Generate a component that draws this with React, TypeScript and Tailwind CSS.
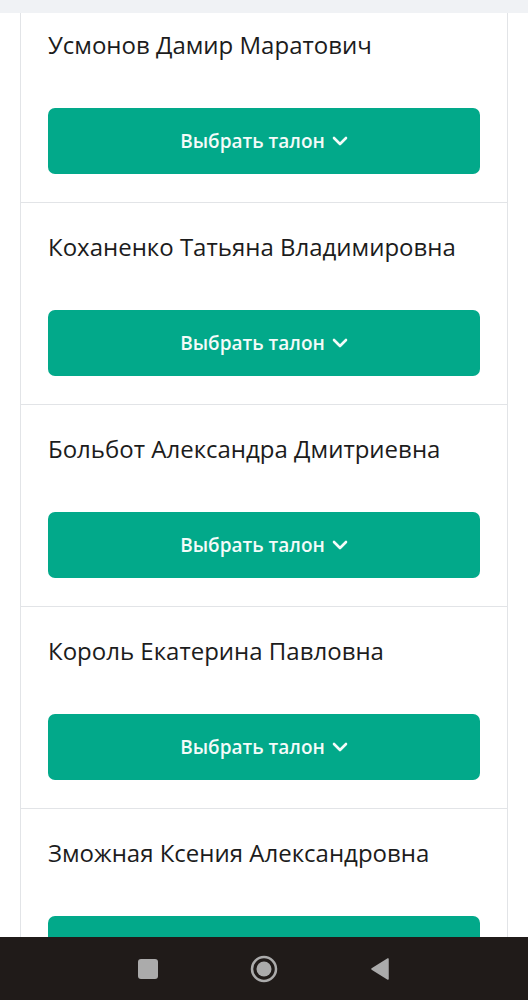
import { ChevronDown } from "lucide-react";

const doctors = [
  "Усмонов Дамир Маратович",
  "Коханенко Татьяна Владимировна",
  "Больбот Александра Дмитриевна",
  "Король Екатерина Павловна",
  "Зможная Ксения Александровна",
];

const DoctorRow = ({ name, first }: { name: string; first: boolean }) => {
  return (
    <div
      className={`border-b border-[#e2e4e7] px-[27px] pb-[28px] ${
        first ? "pt-[17px]" : "pt-[29px]"
      }`}
    >
      <p className="h-[30px] text-[24px] leading-[30px] text-[#1c1c1c]">{name}</p>
      <button className="mt-[48px] flex h-[66px] w-full items-center justify-center gap-[3px] rounded-[7px] bg-[#02a98a] pl-[4px] text-[19px] font-semibold text-[#f4fbf9]">
        Выбрать талон
        <ChevronDown size={24} strokeWidth={2.6} />
      </button>
    </div>
  );
};

const App = () => {
  return (
    <div className="flex h-[1000px] w-[528px] flex-col bg-white font-['Open_Sans',sans-serif]">
      <div className="h-[13px] shrink-0 bg-[#f0f2f5]" />
      <div className="h-[924px] overflow-hidden">
        <div className="mx-[20px] border-x border-[#e2e4e7]">
          {doctors.map((d, i) => (
            <DoctorRow key={d} name={d} first={i === 0} />
          ))}
        </div>
      </div>
      <div className="flex h-[63px] shrink-0 items-center justify-center gap-[92px] bg-[#201b19]">
        <div className="h-[20px] w-[20px] rounded-[3px] bg-[#ababab]" />
        <svg width="28" height="28" viewBox="0 0 28 28">
          <circle cx="14" cy="14" r="12" fill="none" stroke="#ababab" strokeWidth="2.5" />
          <circle cx="14" cy="14" r="7.5" fill="#ababab" />
        </svg>
        <svg width="20" height="22" viewBox="0 0 20 22">
          <path d="M18 1 L18 21 L2 11 Z" fill="#ababab" stroke="#ababab" strokeWidth="1.5" strokeLinejoin="round" />
        </svg>
      </div>
    </div>
  );
};

export default App;
